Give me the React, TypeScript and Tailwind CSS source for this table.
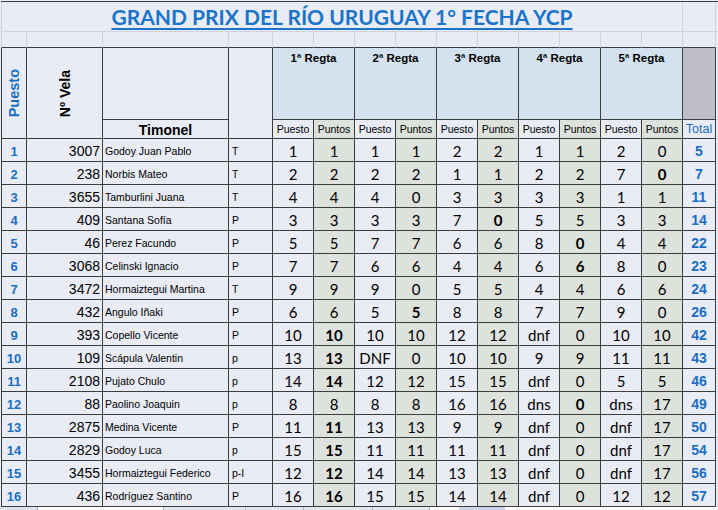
import React from 'react';

type Row = { p: number; v: string; n: string; c: string; r: [string, string][]; t: number; b: number[] };

const DATA: Row[] = [
  { p: 1, v: '3007', n: 'Godoy Juan Pablo', c: 'T', r: [['1', '1'], ['1', '1'], ['2', '2'], ['1', '1'], ['2', '0']], t: 5, b: [] },
  { p: 2, v: '238', n: 'Norbis Mateo', c: 'T', r: [['2', '2'], ['2', '2'], ['1', '1'], ['2', '2'], ['7', '0']], t: 7, b: [4] },
  { p: 3, v: '3655', n: 'Tamburlini Juana', c: 'T', r: [['4', '4'], ['4', '0'], ['3', '3'], ['3', '3'], ['1', '1']], t: 11, b: [] },
  { p: 4, v: '409', n: 'Santana Sofía', c: 'P', r: [['3', '3'], ['3', '3'], ['7', '0'], ['5', '5'], ['3', '3']], t: 14, b: [2] },
  { p: 5, v: '46', n: 'Perez Facundo', c: 'P', r: [['5', '5'], ['7', '7'], ['6', '6'], ['8', '0'], ['4', '4']], t: 22, b: [3] },
  { p: 6, v: '3068', n: 'Celinski Ignacio', c: 'P', r: [['7', '7'], ['6', '6'], ['4', '4'], ['6', '6'], ['8', '0']], t: 23, b: [3] },
  { p: 7, v: '3472', n: 'Hormaiztegui Martina', c: 'T', r: [['9', '9'], ['9', '0'], ['5', '5'], ['4', '4'], ['6', '6']], t: 24, b: [] },
  { p: 8, v: '432', n: 'Angulo Iñaki', c: 'P', r: [['6', '6'], ['5', '5'], ['8', '8'], ['7', '7'], ['9', '0']], t: 26, b: [1] },
  { p: 9, v: '393', n: 'Copello Vicente', c: 'P', r: [['10', '10'], ['10', '10'], ['12', '12'], ['dnf', '0'], ['10', '10']], t: 42, b: [0] },
  { p: 10, v: '109', n: 'Scápula Valentin', c: 'p', r: [['13', '13'], ['DNF', '0'], ['10', '10'], ['9', '9'], ['11', '11']], t: 43, b: [0] },
  { p: 11, v: '2108', n: 'Pujato Chulo', c: 'p', r: [['14', '14'], ['12', '12'], ['15', '15'], ['dnf', '0'], ['5', '5']], t: 46, b: [0] },
  { p: 12, v: '88', n: 'Paolino Joaquin', c: 'p', r: [['8', '8'], ['8', '8'], ['16', '16'], ['dns', '0'], ['dns', '17']], t: 49, b: [3] },
  { p: 13, v: '2875', n: 'Medina Vicente', c: 'P', r: [['11', '11'], ['13', '13'], ['9', '9'], ['dnf', '0'], ['dnf', '17']], t: 50, b: [0] },
  { p: 14, v: '2829', n: 'Godoy Luca', c: 'p', r: [['15', '15'], ['11', '11'], ['11', '11'], ['dnf', '0'], ['dnf', '17']], t: 54, b: [0] },
  { p: 15, v: '3455', n: 'Hormaiztegui Federico', c: 'p-I', r: [['12', '12'], ['14', '14'], ['13', '13'], ['dnf', '0'], ['dnf', '17']], t: 56, b: [0] },
  { p: 16, v: '436', n: 'Rodríguez Santino', c: 'P', r: [['16', '16'], ['15', '15'], ['14', '14'], ['dnf', '0'], ['12', '12']], t: 57, b: [0] },
];

const REGTAS = ['1ª Regta', '2ª Regta', '3ª Regta', '4ª Regta', '5ª Regta'];

export default function App() {
  return (
    <div className="w-[718px] h-[510px] overflow-hidden bg-[#e9ecf5] pl-px pt-px font-['Liberation_Sans',Arial,sans-serif] text-black">
      <div className="grid grid-cols-[26px_76px_126px_44px_repeat(10,41px)_33px_1fr] grid-rows-[30px_16px_72px_19px_repeat(16,23px)] border-t border-[#3d3d3d]">
        {/* Title row */}
        <div className="col-span-14 border-l border-r border-b border-[#cdd3e1] flex items-end justify-center pb-[4px]">
          <span className="font-['Lato',sans-serif] font-bold text-[21px] leading-none text-[#1a74c9] underline decoration-2 underline-offset-[3px]">
            GRAND PRIX DEL RÍO URUGUAY 1° FECHA YCP
          </span>
        </div>
        <div className="border-r border-b border-[#cdd3e1]" />
        <div className="border-b border-[#cdd3e1]" />

        {/* Row 2 */}
        {Array.from({ length: 15 }).map((_, i) => (
          <div key={`r2-${i}`} className={`border-r border-r-[#cdd3e1] border-b border-b-[#3d3d3d] ${i === 0 ? 'border-l border-l-[#cdd3e1]' : ''}`} />
        ))}
        <div className="border-b border-[#cdd3e1]" />

        {/* Header */}
        <div className="col-start-1 row-start-3 row-span-2 border-l border-r border-b border-[#3d3d3d] flex items-end justify-center pb-[21px]">
          <span className="[writing-mode:vertical-rl] rotate-180 font-bold text-[14.5px] leading-none text-[#1a6fc4]">Puesto</span>
        </div>
        <div className="col-start-2 row-start-3 row-span-2 border-r border-b border-[#3d3d3d] flex items-end justify-center pb-[21px]">
          <span className="[writing-mode:vertical-rl] rotate-180 font-bold text-[14px] leading-none">Nº Vela</span>
        </div>
        <div className="col-start-3 row-start-3 border-r border-b border-[#3d3d3d]" />
        <div className="col-start-3 row-start-4 border-r border-b border-[#3d3d3d] flex items-center justify-center">
          <span className="font-bold text-[14px] leading-none pt-px">Timonel</span>
        </div>
        <div className="col-start-4 row-start-3 row-span-2 border-r border-b border-[#3d3d3d]" />
        {REGTAS.map((r, i) => (
          <React.Fragment key={r}>
            <div
              className="row-start-3 col-span-2 border-r border-b border-[#3d3d3d] bg-[#d3e2ee] flex justify-center pt-[3px]"
              style={{ gridColumnStart: 5 + i * 2 }}
            >
              <span className="font-bold text-[11.5px] leading-[14px]">{r}</span>
            </div>
            <div
              className="row-start-4 border-r border-b border-[#3d3d3d] flex items-center justify-center text-[10.5px] leading-none"
              style={{ gridColumnStart: 5 + i * 2 }}
            >
              Puesto
            </div>
            <div
              className="row-start-4 border-r border-b border-[#3d3d3d] bg-[#dde2dc] flex items-center justify-center text-[10.5px] leading-none"
              style={{ gridColumnStart: 6 + i * 2 }}
            >
              Puntos
            </div>
          </React.Fragment>
        ))}
        <div className="col-start-15 row-start-3 border-r border-b border-[#3d3d3d] bg-[#bebeca]" />
        <div className="col-start-15 row-start-4 border-r border-b border-[#3d3d3d] flex items-center justify-center text-[12.5px] leading-none text-[#1a6fc4]">
          Total
        </div>
        <div className="col-start-16 row-start-3 border-b border-[#cdd3e1]" />
        <div className="col-start-16 row-start-4 border-b border-[#cdd3e1]" />

        {/* Data rows */}
        {DATA.map((d) => (
          <React.Fragment key={d.p}>
            <div className="col-start-1 border-l border-r border-b border-[#3d3d3d] flex items-center justify-center pt-[3px] font-bold text-[13px] leading-none text-[#1a6fc4]">
              {d.p}
            </div>
            <div className="border-r border-b border-[#3d3d3d] flex items-center justify-end pr-[2px] pt-[1px] text-[14px] leading-none">
              {d.v}
            </div>
            <div className="border-r border-b border-[#3d3d3d] flex items-center pl-[2px] pt-[3px] text-[10.5px] leading-none whitespace-nowrap">
              {d.n}
            </div>
            <div className="border-r border-b border-[#3d3d3d] flex items-center pl-[3px] pt-[3px] text-[10.5px] leading-none">
              {d.c}
            </div>
            {d.r.map(([pu, pt], i) => (
              <React.Fragment key={i}>
                <div className="border-r border-b border-[#3d3d3d] flex items-center justify-center pt-[2px] font-['Lato',sans-serif] text-[15px] leading-none">
                  {pu}
                </div>
                <div
                  className={`border-r border-b border-[#3d3d3d] bg-[#dde2dc] flex items-center justify-center pt-[2px] font-['Lato',sans-serif] text-[15px] leading-none ${d.b.includes(i) ? 'font-bold' : ''}`}
                >
                  {pt}
                </div>
              </React.Fragment>
            ))}
            <div className="border-r border-b border-[#3d3d3d] flex items-center justify-center pt-[2px] font-bold text-[14px] leading-none text-[#1a6fc4]">
              {d.t}
            </div>
            <div className="border-b border-[#cdd3e1]" />
          </React.Fragment>
        ))}
      </div>
      {/* sheet tab strip */}
      <div className="flex h-[4px] -ml-px">
        <div className="w-[37px] bg-[#dfe4ee]" />
        <div className="w-[126px] bg-white border-l border-[#a9b3c6]" />
        <div className="w-[82px] bg-[#e4e8f0] border-l border-[#a9b3c6]" />
        <div className="w-[58px] bg-[#e4e8f0] border-l border-[#a9b3c6]" />
        <div className="w-[69px] bg-[#e4e8f0] border-l border-[#a9b3c6]" />
        <div className="w-[57px] bg-[#e4e8f0] border-l border-[#a9b3c6]" />
        <div className="w-[30px] bg-white border-l border-[#a9b3c6]" />
        <div className="w-[46px] bg-[#c9d6ea]" />
        <div className="flex-1 bg-white" />
      </div>
    </div>
  );
}
